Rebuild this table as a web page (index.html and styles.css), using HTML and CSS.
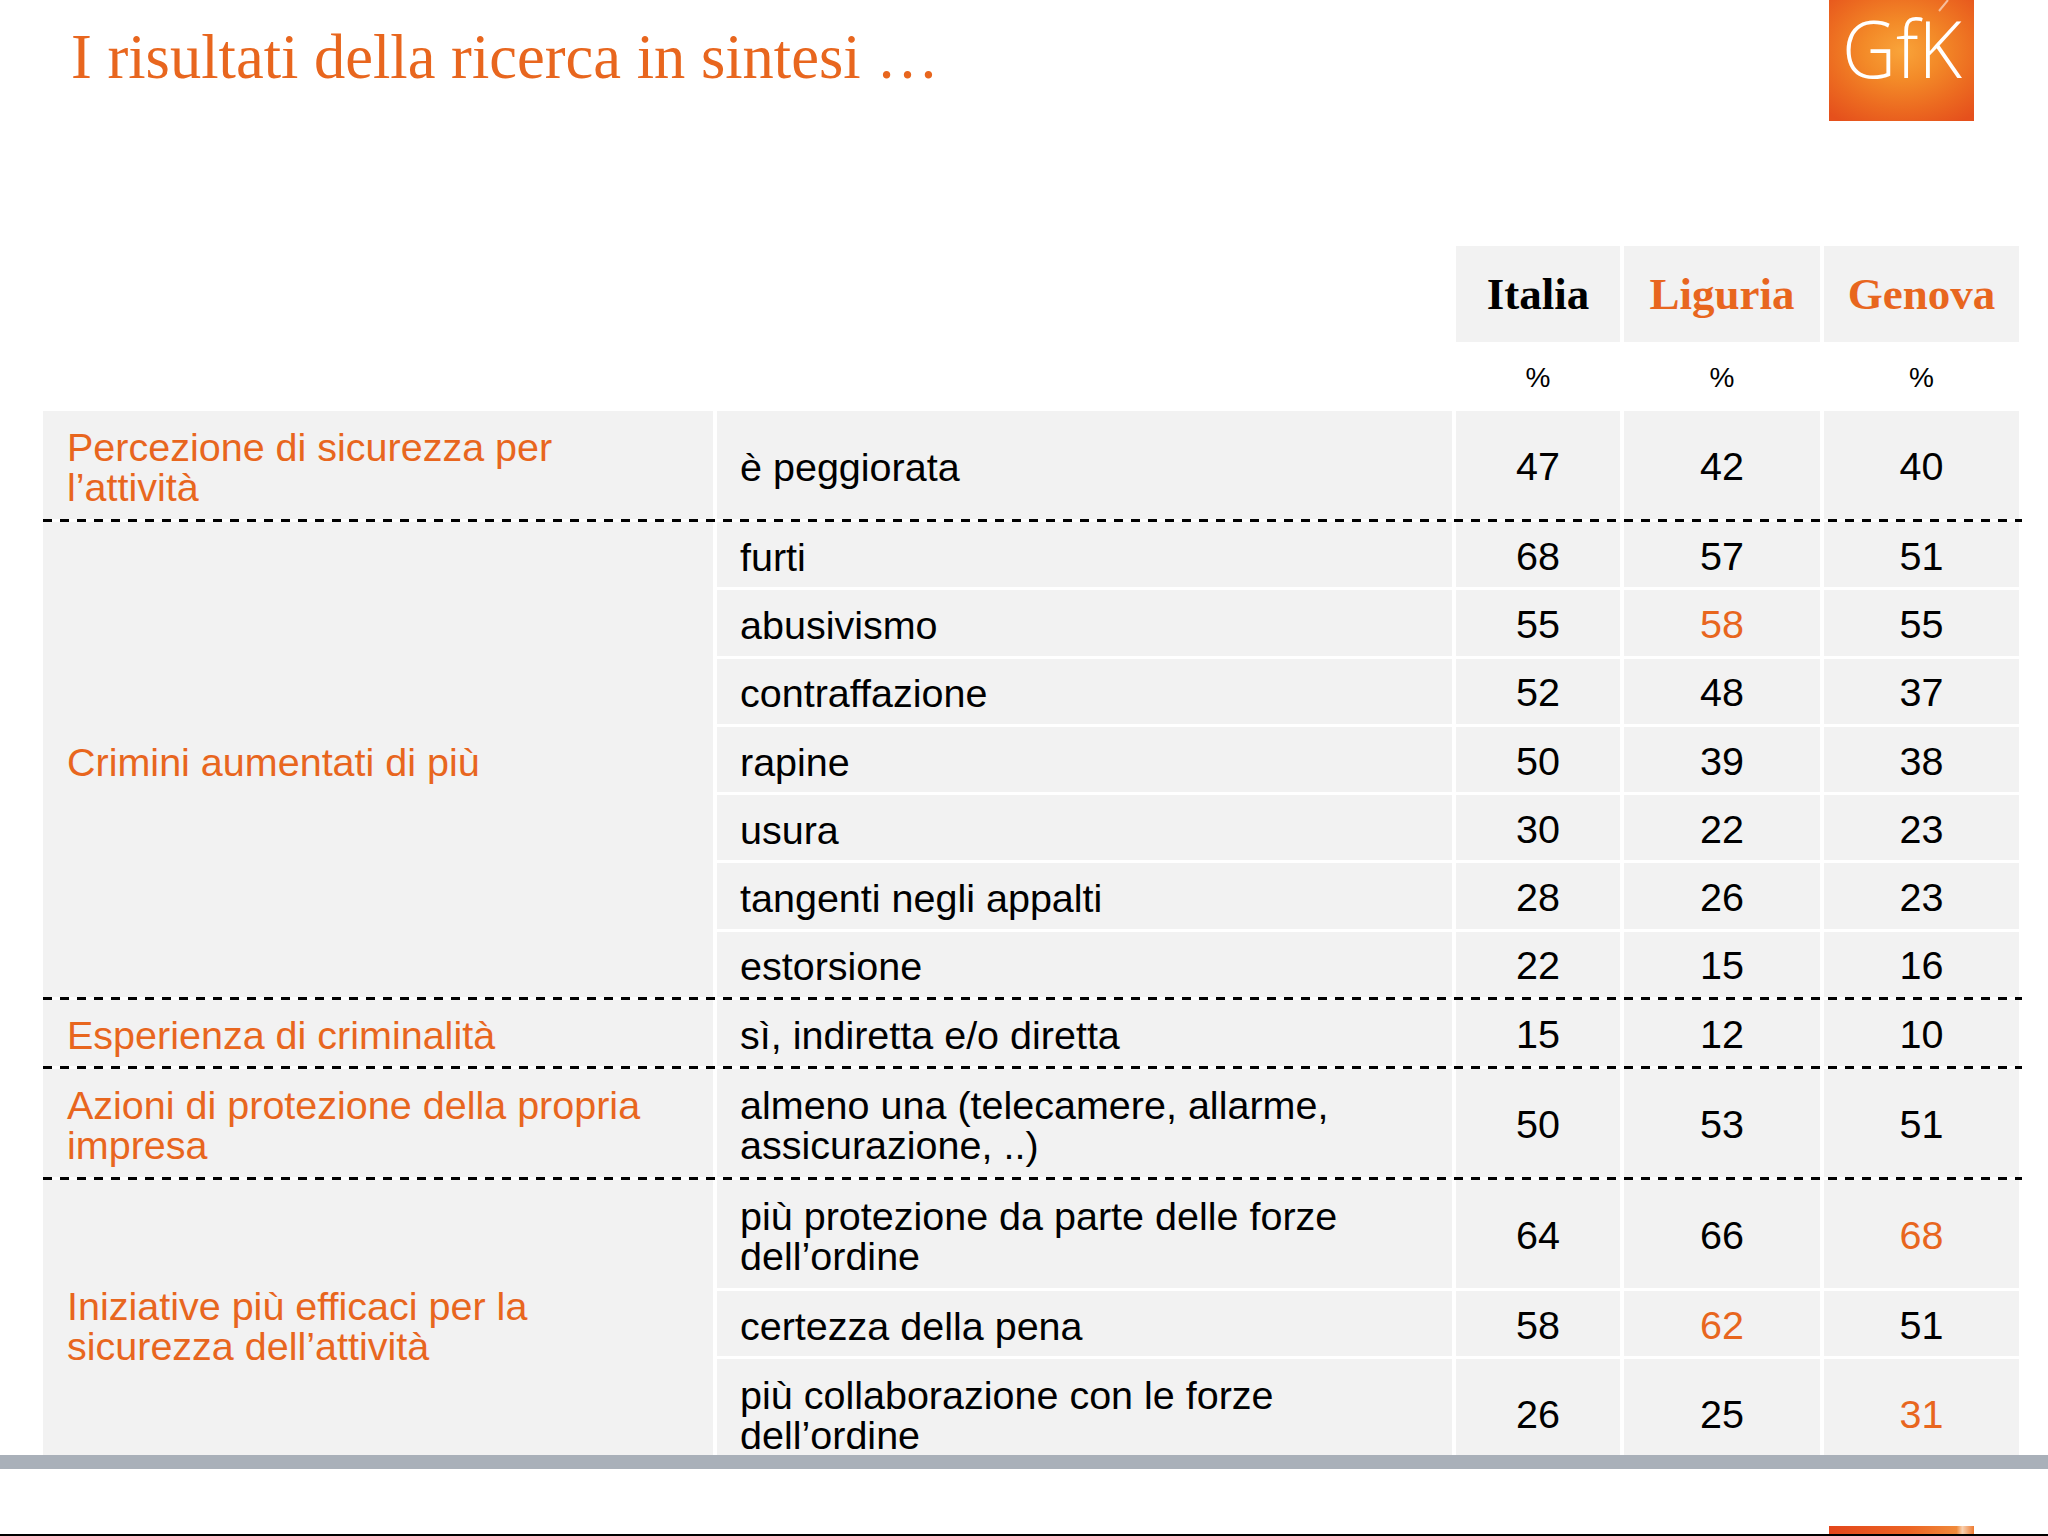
FILE: index.html
```html
<!DOCTYPE html>
<html lang="it">
<head>
<meta charset="utf-8">
<title>I risultati della ricerca in sintesi</title>
<link rel="stylesheet" href="styles.css">
</head>
<body>
<div class="page">
  <div class="top">
    <h1 class="title">I risultati della ricerca in sintesi …</h1>
    <div class="logo">
      <svg width="145" height="121" viewBox="0 0 145 121">
        <line x1="110" y1="11" x2="119" y2="0" stroke="#fff" stroke-width="2" opacity="0.55"/>
        <text x="13" y="78" class="logo-text" textLength="120" lengthAdjust="spacingAndGlyphs">GfK</text>
      </svg>
    </div>
  </div>

  <div class="table">
    <div class="grid head">
      <div></div><div></div>
      <div class="hcell">Italia</div>
      <div class="hcell orange">Liguria</div>
      <div class="hcell orange">Genova</div>
    </div>
    <div class="grid pct">
      <div></div><div></div>
      <div class="pcell">%</div>
      <div class="pcell">%</div>
      <div class="pcell">%</div>
    </div>

    <div class="grid group">
      <div class="cat span1">Percezione di sicurezza per<br>l’attività</div>
      <div class="lab r2">è peggiorata</div>
      <div class="num">47</div><div class="num">42</div><div class="num">40</div>
    </div>
    <div class="sep"></div>

    <div class="grid group">
      <div class="cat span7">Crimini aumentati di più</div>
      <div class="lab r1">furti</div>
      <div class="num">68</div><div class="num">57</div><div class="num">51</div>
      <div class="lab r1">abusivismo</div>
      <div class="num">55</div><div class="num orange">58</div><div class="num">55</div>
      <div class="lab r1">contraffazione</div>
      <div class="num">52</div><div class="num">48</div><div class="num">37</div>
      <div class="lab r1">rapine</div>
      <div class="num">50</div><div class="num">39</div><div class="num">38</div>
      <div class="lab r1">usura</div>
      <div class="num">30</div><div class="num">22</div><div class="num">23</div>
      <div class="lab r1">tangenti negli appalti</div>
      <div class="num">28</div><div class="num">26</div><div class="num">23</div>
      <div class="lab r1">estorsione</div>
      <div class="num">22</div><div class="num">15</div><div class="num">16</div>
    </div>
    <div class="sep"></div>

    <div class="grid group">
      <div class="cat span1">Esperienza di criminalità</div>
      <div class="lab r1b">sì, indiretta e/o diretta</div>
      <div class="num">15</div><div class="num">12</div><div class="num">10</div>
    </div>
    <div class="sep"></div>

    <div class="grid group">
      <div class="cat span1">Azioni di protezione della propria<br>impresa</div>
      <div class="lab r2">almeno una (telecamere, allarme,<br>assicurazione, ..)</div>
      <div class="num">50</div><div class="num">53</div><div class="num">51</div>
    </div>
    <div class="sep"></div>

    <div class="grid group">
      <div class="cat span3">Iniziative più efficaci per la<br>sicurezza dell’attività</div>
      <div class="lab r2">più protezione da parte delle forze<br>dell’ordine</div>
      <div class="num">64</div><div class="num">66</div><div class="num orange">68</div>
      <div class="lab r1">certezza della pena</div>
      <div class="num">58</div><div class="num orange">62</div><div class="num">51</div>
      <div class="lab r2">più collaborazione con le forze<br>dell’ordine</div>
      <div class="num">26</div><div class="num">25</div><div class="num orange">31</div>
    </div>
  </div>

  <div class="bar"></div>
  <div class="spacer"></div>
  <div class="next">
    <div class="frag"></div>
    <div class="line"></div>
  </div>
</div>
</body>
</html>
```
FILE: styles.css
```css
* { box-sizing: border-box; }

body {
  margin: 0;
  width: 2048px;
  height: 1536px;
  overflow: hidden;
  background: #ffffff;
  font-family: "Liberation Sans", Arial, sans-serif;
  color: #000;
}

.page {
  display: flex;
  flex-direction: column;
  height: 1536px;
}

.top {
  height: 246px;
  display: flex;
  align-items: flex-start;
}

.title {
  margin: 0;
  padding: 25px 0 0 71px;
  font-family: "Liberation Serif", "Times New Roman", serif;
  font-weight: normal;
  font-size: 62.5px;
  line-height: 64px;
  color: #E8661E;
  white-space: nowrap;
}

.logo {
  margin-left: auto;
  margin-right: 74px;
  width: 145px;
  height: 121px;
  background:
    radial-gradient(ellipse 75% 70% at 50% 42%, #F9A43A 0%, #F38A28 35%, #EC6A20 70%, #E5501C 100%);
}

.logo svg { display: block; }

.logo-text {
  font-family: "Open Sans", "DejaVu Sans", sans-serif;
  font-weight: 300;
  font-size: 80px;
  fill: #ffffff;
}

.table {
  height: 1209px;
  overflow: hidden;
  padding-left: 43px;
}

.grid {
  display: grid;
  grid-template-columns: 670px 735px 164px 196px 195px;
  column-gap: 4px;
}

.head { height: 96px; }

.hcell {
  background: #F2F2F2;
  display: flex;
  align-items: center;
  justify-content: center;
  font-family: "Liberation Serif", "Times New Roman", serif;
  font-weight: bold;
  font-size: 45px;
  color: #000;
}

.pct { height: 69px; }

.pcell {
  display: flex;
  align-items: center;
  justify-content: center;
  font-size: 28px;
  padding-top: 3px;
}

.group {
  row-gap: 3px;
  font-size: 39.5px;
  line-height: 40px;
}

.cat {
  grid-column: 1;
  background: #F2F2F2;
  display: flex;
  align-items: center;
  padding: 4px 0 0 24px;
  color: #E8661E;
}

.span1 { grid-row: span 1; }
.span3 { grid-row: span 3; }
.span7 { grid-row: span 7; }

.lab {
  background: #F2F2F2;
  display: flex;
  align-items: center;
  padding: 4px 0 0 23px;
  white-space: nowrap;
}

.r1 { height: 65.3px; }
.r1b { height: 66px; }
.r2 { height: 108px; }

.num {
  background: #F2F2F2;
  display: flex;
  align-items: center;
  justify-content: center;
  padding-top: 2px;
}

.orange { color: #E8661E; }

.sep {
  width: 1979px;
  height: 3px;
  background: repeating-linear-gradient(90deg, #000 0 9px, transparent 9px 17px);
}

.bar {
  height: 14px;
  background: #A9B0B9;
}

.spacer { flex: 1; }

.next {
  height: 10px;
  display: flex;
  flex-direction: column;
}

.frag {
  margin-left: 1829px;
  width: 145px;
  height: 8px;
  background: linear-gradient(90deg, #E3461B 0%, #EC6424 55%, #F08A3A 88%, #F7D0B0 92%, #EE7A30 100%);
}

.line {
  height: 2px;
  background: #000;
}
```
